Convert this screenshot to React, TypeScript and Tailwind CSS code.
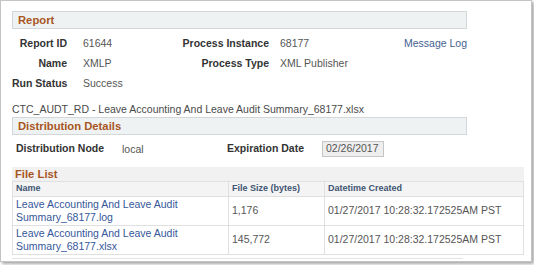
import React from 'react';

const font = { fontFamily: '"Liberation Sans", Arial, sans-serif' };

function SectionBar({ title, className = '' }: { title: string; className?: string }) {
  return (
    <div className={`h-[18px] border border-[#d3d7d9] bg-[#eff2f3] pl-[5px] text-[11.25px] font-bold leading-[16px] text-[#a8561f] ${className}`}>
      {title}
    </div>
  );
}

const files = [
  { name: ['Leave Accounting And Leave Audit', 'Summary_68177.log'], size: '1,176', created: '01/27/2017 10:28:32.172525AM PST' },
  { name: ['Leave Accounting And Leave Audit', 'Summary_68177.xlsx'], size: '145,772', created: '01/27/2017 10:28:32.172525AM PST' },
];

export default function App() {
  return (
    <div className="w-[534px] h-[265px] bg-white" style={font}>
      <div className="w-[532px] h-[262px] border border-[#c4c4c4] bg-white pl-[11px] pt-[10px] shadow-[2px_2px_3px_rgba(0,0,0,0.35)] text-[10.5px] text-[#555]">
        <SectionBar title="Report" className="w-[455px]" />

        <div className="mt-[4px] grid w-[455px] grid-cols-[55px_113px_89px_1fr_auto] leading-[20px]">
          <div className="text-right font-bold text-[#333]">Report ID</div>
          <div className="pl-4">61644</div>
          <div className="text-right font-bold text-[#333]">Process Instance</div>
          <div className="pl-[11px]">68177</div>
          <div className="text-right text-[#44638f]">Message Log</div>

          <div className="text-right font-bold text-[#333]">Name</div>
          <div className="pl-4">XMLP</div>
          <div className="text-right font-bold text-[#333]">Process Type</div>
          <div className="pl-[11px]">XML Publisher</div>
          <div />

          <div className="whitespace-nowrap text-right font-bold text-[#333]">Run Status</div>
          <div className="pl-4">Success</div>
          <div />
          <div />
          <div />
        </div>

        <div className="mt-[8px] h-[16px] leading-[16px] text-[#4a4a4a]">
          CTC_AUDT_RD - Leave Accounting And Leave Audit Summary_68177.xlsx
        </div>

        <SectionBar title="Distribution Details" className="w-[455px]" />

        <div className="mt-[5px] flex h-[17px] items-center">
          <div className="ml-[4px] w-[106px] font-bold text-[#333]">Distribution Node</div>
          <div className="mt-[2px] w-[105px]">local</div>
          <div className="w-[95px] font-bold text-[#333]">Expiration Date</div>
          <div className="flex h-[16px] w-[62px] items-center border border-[#c6c6c6] bg-[#eeeeee] pl-[3px] text-[#555]">
            02/26/2017
          </div>
        </div>

        <div className="mt-[10px] w-[512px]">
          <div className="h-[14px] bg-[#f1f1f1] pl-[3px] text-[11.25px] font-bold leading-[14px] text-[#a8561f]">File List</div>
          <table className="w-[512px] border-collapse">
            <thead>
              <tr className="h-[14px] bg-[#f4f4f4] text-left text-[9px] font-bold text-[#3f5473]">
                <th className="w-[216px] border border-[#e0e0e0] pl-[3px] font-bold">Name</th>
                <th className="w-[96px] border border-[#e0e0e0] pl-[3px] font-bold">File Size (bytes)</th>
                <th className="border border-[#e0e0e0] pl-[3px] font-bold">Datetime Created</th>
              </tr>
            </thead>
            <tbody>
              {files.map((f) => (
                <tr key={f.name[1]} className="h-[29px]">
                  <td className="border border-[#e0e0e0] pl-[3px] leading-[13px] text-[#35579a]">
                    {f.name[0]}
                    <br />
                    {f.name[1]}
                  </td>
                  <td className="border border-[#e0e0e0] pl-[3px]">{f.size}</td>
                  <td className="border border-[#e0e0e0] pl-[3px]">{f.created}</td>
                </tr>
              ))}
            </tbody>
          </table>
          <div className="mt-[3px] h-px w-[451px] bg-[#e3e3e3]" />
        </div>
      </div>
    </div>
  );
}
